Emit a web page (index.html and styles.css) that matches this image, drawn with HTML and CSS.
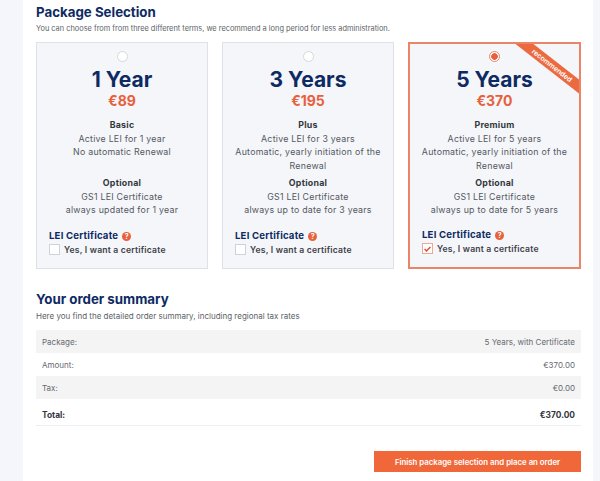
FILE: index.html
```html
<!DOCTYPE html>
<html lang="en">
<head>
    <meta charset="UTF-8">
    <meta name="viewport" content="width=device-width, initial-scale=1.0">
    <title>Package Selection</title>
    <link rel="stylesheet" href="styles.css">
</head>
<body>
    <div class="panel">
        <h2 class="title">Package Selection</h2>
        <p class="lead">You can choose from from three different terms, we recommend a long period for less administration.</p>

        <div class="packages">
            <div class="package">
                <span class="radio"></span>
                <div class="term">1 Year</div>
                <div class="price">€89</div>
                <div class="details">
                    <div class="included">
                        <strong>Basic</strong>
                        <div>Active LEI for 1 year</div>
                        <div>No automatic Renewal</div>
                    </div>
                    <strong>Optional</strong>
                    <div>GS1 LEI Certificate</div>
                    <div>always updated for 1 year</div>
                </div>
                <div class="cert">
                    <div class="cert-title">LEI Certificate <span class="help">?</span></div>
                    <label class="cert-check"><span class="box"></span>Yes, I want a certificate</label>
                </div>
            </div>

            <div class="package">
                <span class="radio"></span>
                <div class="term">3 Years</div>
                <div class="price">€195</div>
                <div class="details">
                    <div class="included">
                        <strong>Plus</strong>
                        <div>Active LEI for 3 years</div>
                        <div>Automatic, yearly initiation of the Renewal</div>
                    </div>
                    <strong>Optional</strong>
                    <div>GS1 LEI Certificate</div>
                    <div>always up to date for 3 years</div>
                </div>
                <div class="cert">
                    <div class="cert-title">LEI Certificate <span class="help">?</span></div>
                    <label class="cert-check"><span class="box"></span>Yes, I want a certificate</label>
                </div>
            </div>

            <div class="package selected">
                <div class="ribbon">recommended</div>
                <span class="radio checked"></span>
                <div class="term">5 Years</div>
                <div class="price">€370</div>
                <div class="details">
                    <div class="included">
                        <strong>Premium</strong>
                        <div>Active LEI for 5 years</div>
                        <div>Automatic, yearly initiation of the Renewal</div>
                    </div>
                    <strong>Optional</strong>
                    <div>GS1 LEI Certificate</div>
                    <div>always up to date for 5 years</div>
                </div>
                <div class="cert">
                    <div class="cert-title">LEI Certificate <span class="help">?</span></div>
                    <label class="cert-check">
                        <span class="box ticked">
                            <svg width="7" height="6" viewBox="0 0 7 6"><path d="M0.6 3l1.9 1.9L6.4 0.9" fill="none" stroke="#e2472f" stroke-width="1.4"/></svg>
                        </span>Yes, I want a certificate
                    </label>
                </div>
            </div>
        </div>

        <h2 class="title summary-title">Your order summary</h2>
        <p class="lead lead-wide">Here you find the detailed order summary, including regional tax rates</p>

        <div class="summary">
            <div class="row shaded"><span>Package:</span><span>5 Years, with Certificate</span></div>
            <div class="row"><span>Amount:</span><span>€370.00</span></div>
            <div class="row shaded"><span>Tax:</span><span>€0.00</span></div>
            <div class="row total"><span>Total:</span><span>€370.00</span></div>
        </div>

        <div class="actions">
            <button class="finish">Finish package selection and place an order</button>
        </div>
    </div>
</body>
</html>
```

FILE: styles.css
```css
html, body {
    height: 100%;
}

body {
    margin: 0;
    overflow: hidden;
    background-color: #f4f6fc;
    font-family: "Inter", "Liberation Sans", sans-serif;
    color: #55585f;
}

.panel {
    box-sizing: border-box;
    width: 570px;
    height: 481px;
    margin-left: 23px;
    padding: 4px 12px 0 13px;
    background-color: #fff;
}

.title {
    margin: 0;
    font-size: 13.3px;
    line-height: 16px;
    font-weight: 700;
    color: #0e2a63;
}

.lead {
    margin: 4px 0 0;
    font-size: 7.4px;
    line-height: 10px;
    color: #5c5f66;
}

.lead-wide {
    font-size: 8px;
}

.packages {
    display: grid;
    grid-template-columns: 172px 172px 173px;
    gap: 14px;
    margin-top: 8px;
}

.package {
    position: relative;
    box-sizing: border-box;
    height: 227px;
    padding-top: 8px;
    overflow: hidden;
    text-align: center;
    background-color: #f4f6fa;
    border: 1px solid #dde1e8;
}

.package.selected {
    border: 2px solid #ec8468;
    padding-top: 7px;
}

.radio {
    display: block;
    box-sizing: border-box;
    width: 11px;
    height: 11px;
    margin: 0 auto;
    background-color: #fff;
    border: 1px solid #d6d8dc;
    border-radius: 50%;
}

.radio.checked {
    border-color: #ec8468;
    background: radial-gradient(circle, #e8603c 0 3px, #fff 3.6px);
}

.term {
    margin-top: 6px;
    font-size: 21px;
    line-height: 24px;
    font-weight: 700;
    color: #0e2a63;
}

.price {
    font-size: 14px;
    line-height: 18px;
    font-weight: 700;
    color: #e8603c;
}

.details {
    margin-top: 8px;
    font-size: 8.8px;
    line-height: 13.5px;
    letter-spacing: 0.25px;
    color: #55585f;
}

.details strong {
    display: block;
    color: #33363c;
}

.included {
    min-height: 54px;
    margin-bottom: 4px;
}

.cert {
    position: absolute;
    left: 12px;
    bottom: 13px;
    text-align: left;
}

.cert-title {
    display: flex;
    align-items: center;
    gap: 4px;
    font-size: 9.6px;
    line-height: 14px;
    font-weight: 700;
    letter-spacing: 0.2px;
    color: #0e2a63;
}

.help {
    width: 9px;
    height: 9px;
    font-size: 7px;
    line-height: 9px;
    text-align: center;
    letter-spacing: 0;
    color: #fff;
    background-color: #e8603c;
    border-radius: 50%;
}

.cert-check {
    display: flex;
    align-items: center;
    gap: 4px;
    margin-top: 1px;
    font-size: 8.6px;
    font-weight: 600;
    letter-spacing: 0.2px;
    color: #3d4047;
}

.box {
    display: flex;
    align-items: center;
    justify-content: center;
    box-sizing: border-box;
    width: 11px;
    height: 11px;
    background-color: #fff;
    border: 1px solid #cfd2d8;
}

.box.ticked {
    border-color: #eda898;
}

.ribbon {
    position: absolute;
    top: 16px;
    right: -23px;
    width: 100px;
    font-size: 7px;
    line-height: 11px;
    font-weight: 600;
    color: #fff;
    background-color: #ec6a40;
    transform: rotate(38deg);
}

.summary-title {
    margin-top: 22px;
}

.summary {
    margin-top: 9px;
}

.row {
    display: flex;
    justify-content: space-between;
    align-items: center;
    box-sizing: border-box;
    height: 23px;
    padding: 0 6px;
    font-size: 8px;
    color: #66696f;
}

.row.shaded {
    background-color: #f4f4f5;
}

.row.total {
    height: 27px;
    padding-top: 6px;
    font-size: 8.4px;
    font-weight: 700;
    color: #33363c;
    border-bottom: 1px solid #eceef1;
}

.actions {
    display: flex;
    justify-content: flex-end;
    margin-top: 25px;
}

.finish {
    width: 207px;
    height: 21px;
    padding: 0;
    font-family: inherit;
    font-size: 7.8px;
    font-weight: 600;
    color: #fff;
    background-color: #f0673a;
    border: none;
}
```
